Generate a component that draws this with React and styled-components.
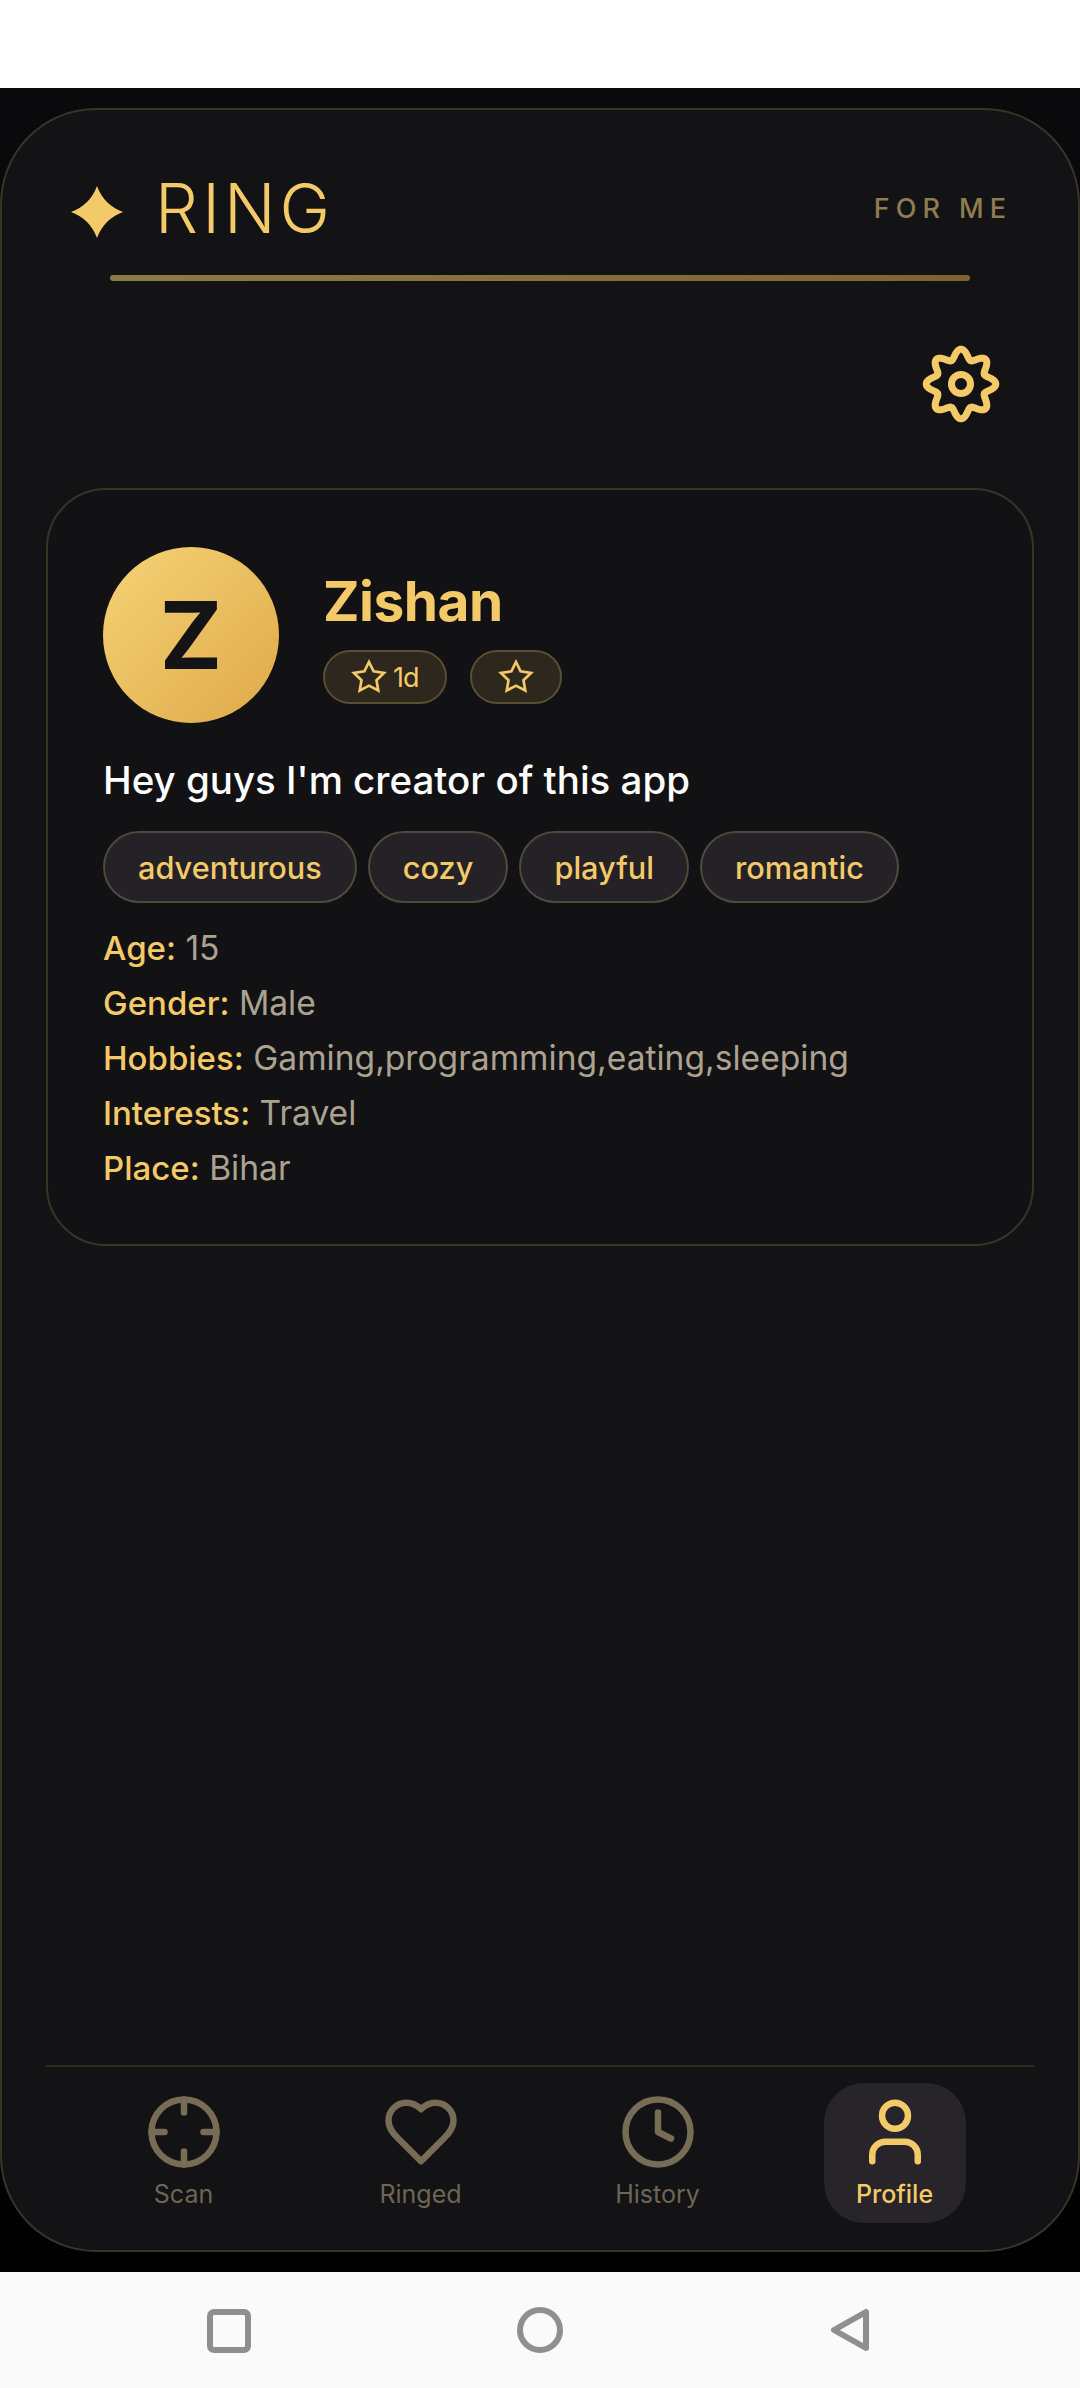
import React from 'react';
import styled, { createGlobalStyle } from 'styled-components';
import { Crosshair, Clock, User } from 'lucide-react';

const Global = createGlobalStyle`
  html, body { margin: 0; padding: 0; background: #fff; }
  * { box-sizing: border-box; }
  body { font-family: Inter, "Noto Sans", sans-serif; }
`;
const gold = '#f4c968';

const Screen = styled.div`width: 1080px; height: 2388px; display: flex; flex-direction: column; overflow: hidden;`;
const StatusBar = styled.div`height: 88px; background: #fff; flex: none;`;
const Stage = styled.div`
  height: 2184px; flex: none; padding: 20px 0;
  background: linear-gradient(180deg, #0a090b 0%, #050505 60%, #000 100%);
`;
const Panel = styled.main`
  height: 2144px; display: flex; flex-direction: column;
  background: #131215; border: 2px solid #3a3426; border-radius: 96px;
`;
const Header = styled.header`
  display: flex; align-items: center; justify-content: space-between;
  padding: 67px 66px 0 69px; height: 128px; flex: none;
`;
const Brand = styled.div`display: flex; align-items: center; gap: 32px;`;
const Spark = styled.svg`width: 52px; height: 52px; flex: none; margin-top: 8px; fill: ${gold};`;
const Title = styled.h1`
  margin: 0; font-size: 68px; line-height: 80px; font-weight: 300; color: ${gold}; letter-spacing: 4px;
`;
const Sub = styled.span`font-size: 27px; font-weight: 500; letter-spacing: 6px; color: #8f7d50; margin-top: 2px;`;
const Rule = styled.div`
  height: 6px; margin: 37px 108px 0; flex: none; border-radius: 3px;
  background: linear-gradient(90deg, #8b7a49, #7f6234);
`;
const GearRow = styled.div`display: flex; justify-content: flex-end; padding: 61px 75px 0 0; flex: none;`;
const GearIcon = styled.svg`width: 84px; height: 84px; fill: none; stroke: ${gold}; stroke-width: 7; stroke-linejoin: round;`;
const Card = styled.section`
  margin: 62px 44px 0; height: 758px; flex: none; padding: 57px 54px 0 55px;
  border: 2px solid #3a3426; border-radius: 60px; background: #121114;
`;
const Top = styled.div`display: flex; align-items: center; gap: 44px;`;
const Avatar = styled.div`
  width: 176px; height: 176px; border-radius: 50%; flex: none; display: flex; align-items: center; justify-content: center;
  background: linear-gradient(135deg, #f5d376 0%, #dfa949 100%);
  color: #141316; font-size: 94px; font-weight: 700; line-height: 1;
`;
const NameCol = styled.div`display: flex; flex-direction: column; gap: 17px; margin-top: 3px;`;
const Name = styled.h2`margin: 0; font-size: 55px; line-height: 64px; font-weight: 700; letter-spacing: -0.5px; color: ${gold};`;
const Badges = styled.div`display: flex; gap: 23px;`;
const Badge = styled.div`
  height: 54px; padding: 0 26px; display: flex; align-items: center; gap: 6px;
  border-radius: 27px; border: 2px solid #5a4e33; background: #2d271d;
  color: ${gold}; font-size: 27px; letter-spacing: -1px; font-weight: 400;
`;
const StarIcon = styled.svg`width: 36px; height: 36px; flex: none; fill: none; stroke: ${gold}; stroke-width: 1.8; stroke-linejoin: miter;`;
const Bio = styled.p`margin: 32px 0 0; font-size: 38.5px; line-height: 50px; font-weight: 500; color: #fff;`;
const Tags = styled.div`display: flex; gap: 11px; margin-top: 26px;`;
const Tag = styled.span`
  height: 72px; padding: 0 33px; display: flex; align-items: center;
  border-radius: 36px; border: 2px solid #51493a; background: #252227;
  color: ${gold}; font-size: 30.7px; font-weight: 500;
`;
const Details = styled.div`display: flex; flex-direction: column; margin-top: 17px;`;
const Line = styled.div`height: 55px; font-size: 33.6px; line-height: 55px; color: #aba28f;`;
const Key = styled.b`font-size: 33px; line-height: 1; font-weight: 500; color: ${gold};`;
const Nav = styled.nav`
  margin: auto 44px 0; height: 185px; flex: none; border-top: 2px solid #2e2a20;
  display: grid; grid-template-columns: repeat(4, 1fr); padding: 16px 21px 28px 19px;
`;
const NavItem = styled.div`
  justify-self: center; width: 142px; height: 140px; border-radius: 40px;
  display: flex; flex-direction: column; align-items: center; padding-top: 10px;
  background: ${p => (p.$active ? '#27242a' : 'transparent')};
  color: ${p => (p.$active ? gold : '#776c56')};
`;
const NavLabel = styled.span`
  font-size: 25px; line-height: 30px; font-weight: ${p => (p.$active ? 500 : 400)}; margin-top: 8px;
  color: ${p => (p.$active ? gold : '#6d6654')};
`;
const HeartIcon = styled.svg`width: 78px; height: 78px; fill: none; stroke: currentColor; stroke-width: 2; stroke-linecap: round; stroke-linejoin: round;`;
const SystemBar = styled.div`
  flex: 1; background: #fafafa; display: grid; grid-template-columns: 1fr 1fr 1fr; align-items: center;
  padding: 0 72px; justify-items: center;
`;
const SysIcon = styled.svg`width: 52px; height: 52px; fill: none; stroke: #8f8f8f; stroke-width: 6; stroke-linejoin: round;`;

const tags = ['adventurous', 'cozy', 'playful', 'romantic'];
const details = [
  ['Age', '15'],
  ['Gender', 'Male'],
  ['Hobbies', 'Gaming,programming,eating,sleeping'],
  ['Interests', 'Travel'],
  ['Place', 'Bihar'],
];
const Heart = () => (
  <HeartIcon viewBox="0 0 24 24"><path d="M19 14c1.49-1.46 3-3.21 3-5.5A5.5 5.5 0 0 0 16.5 3c-1.76 0-3 .5-4.5 2-1.5-1.5-2.74-2-4.5-2A5.5 5.5 0 0 0 2 8.5c0 2.3 1.5 4.05 3 5.5l7 7Z" /></HeartIcon>
);
const IconCrosshair = () => <Crosshair size={78} strokeWidth={2} />;
const IconClock = () => <Clock size={78} strokeWidth={2} />;
const IconUser = () => <User size={78} strokeWidth={2} />;
const nav = [
  ['Scan', IconCrosshair],
  ['Ringed', Heart],
  ['History', IconClock],
  ['Profile', IconUser, true],
];

// Eight rounded lobes around the centre of an 84 unit box.
const gearPath = (() => {
  const pts = [];
  for (let i = 0; i < 240; i += 1) {
    const a = (i / 240) * Math.PI * 2;
    const r = 30 + 4.8 * Math.cos(8 * a);
    pts.push(`${(42 + r * Math.sin(a)).toFixed(2)} ${(42 - r * Math.cos(a)).toFixed(2)}`);
  }
  return `M${pts.join('L')}Z`;
})();

const Star = () => (
  <StarIcon viewBox="0 0 24 24"><polygon points="12 2 15.09 8.26 22 9.27 17 14.14 18.18 21.02 12 17.77 5.82 21.02 7 14.14 2 9.27 8.91 8.26 12 2" /></StarIcon>
);

export default function App() {
  return (
    <Screen>
      <Global />
      <StatusBar />
      <Stage>
        <Panel>
          <Header>
            <Brand>
              <Spark viewBox="0 0 52 52"><path d="M26 0Q33 19 52 26Q33 33 26 52Q19 33 0 26Q19 19 26 0Z" /></Spark>
              <Title>RING</Title>
            </Brand>
            <Sub>FOR ME</Sub>
          </Header>
          <Rule />
          <GearRow>
            <GearIcon viewBox="0 0 84 84">
              <path d={gearPath} />
              <circle cx="42" cy="42" r="9.5" />
            </GearIcon>
          </GearRow>
          <Card>
            <Top>
              <Avatar>Z</Avatar>
              <NameCol>
                <Name>Zishan</Name>
                <Badges>
                  <Badge><Star />1d</Badge>
                  <Badge><Star /></Badge>
                </Badges>
              </NameCol>
            </Top>
            <Bio>Hey guys I'm creator of this app</Bio>
            <Tags>{tags.map(t => <Tag key={t}>{t}</Tag>)}</Tags>
            <Details>
              {details.map(([k, v]) => <Line key={k}><Key>{k}:</Key> {v}</Line>)}
            </Details>
          </Card>
          <Nav>
            {nav.map(([label, Icon, active]) => (
              <NavItem key={label} $active={active}>
                <Icon />
                <NavLabel $active={active}>{label}</NavLabel>
              </NavItem>
            ))}
          </Nav>
        </Panel>
      </Stage>
      <SystemBar>
        <SysIcon viewBox="0 0 52 52"><rect x="8" y="8" width="38" height="38" rx="4" /></SysIcon>
        <SysIcon viewBox="0 0 52 52"><circle cx="26" cy="26" r="20" /></SysIcon>
        <SysIcon viewBox="0 0 52 52"><path d="M40 8V44L8 26Z" /></SysIcon>
      </SystemBar>
    </Screen>
  );
}
